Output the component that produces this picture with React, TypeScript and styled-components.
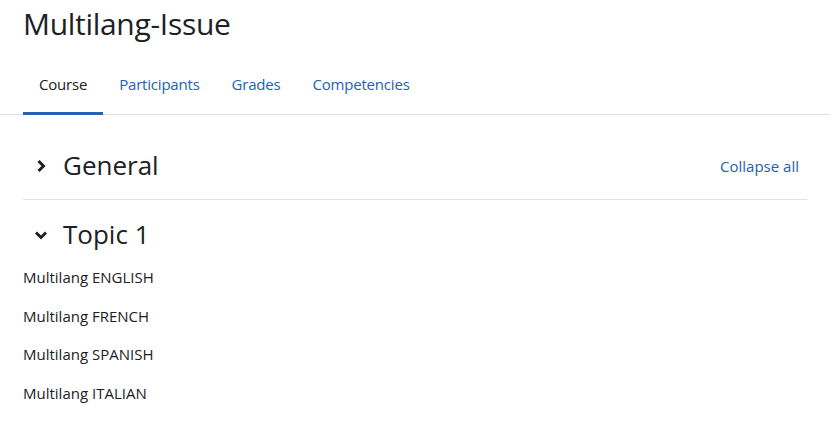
import { createGlobalStyle, styled } from 'styled-components';

const GlobalStyle = createGlobalStyle`
  body {
    margin: 0;
    background: #fff;
    color: #1d2125;
    font-family: 'Open Sans', Lato, sans-serif;
    font-size: 15px;
  }
`;

const SPage = styled.div`
  width: 836px;
`;

const SHeader = styled.header`
  padding: 6px 0 0 23px;
  height: 55px;
  box-sizing: border-box;
`;

const STitle = styled.h1`
  margin: 0;
  font-size: 30px;
  font-weight: 400;
  line-height: 36px;
  letter-spacing: -0.3px;
`;

const SNav = styled.nav`
  display: flex;
  margin-right: 6px;
  padding-left: 23px;
  border-bottom: 1px solid #dee2e6;
`;

const STab = styled.a<{ $active?: boolean }>`
  display: flex;
  align-items: center;
  height: 60px;
  box-sizing: border-box;
  padding: 0 16px;
  border-bottom: 3px solid ${({ $active }) => ($active ? '#2561b4' : 'transparent')};
  margin-bottom: -1px;
  color: ${({ $active }) => ($active ? '#1d2125' : '#2561b4')};
  letter-spacing: -0.2px;
  text-decoration: none;
`;

const SContent = styled.main`
  padding: 0 29px 0 23px;
`;

const SSection = styled.section<{ $divider?: boolean }>`
  border-bottom: ${({ $divider }) => ($divider ? '1px solid #dee2e6' : 'none')};
`;

const SSectionHeader = styled.div<{ $top: number; $bottom: number }>`
  display: flex;
  align-items: center;
  padding: ${({ $top, $bottom }) => `${$top}px 0 ${$bottom}px`};
`;

const SToggle = styled.span`
  display: flex;
  justify-content: center;
  align-items: center;
  width: 35px;
  margin-right: 5px;
  color: #1d2125;
`;

const SSectionTitle = styled.h3`
  flex: 1;
  margin: 0;
  font-size: 26px;
  font-weight: 400;
  line-height: 31px;
`;

const SCollapseAll = styled.a`
  margin-right: 8px;
  color: #2561b4;
  text-decoration: none;
  line-height: 22px;
`;

const SActivityList = styled.ul`
  margin: 0;
  padding: 11px 0 0;
  list-style: none;
`;

const SActivity = styled.li`
  line-height: 22px;
  padding: 5px 0 11.5px;
`;

const ChevronRight = () => (
  <svg width='12' height='14' viewBox='0 0 12 14' fill='none'>
    <polyline points='3.5,2 8.5,7 3.5,12' stroke='currentColor' strokeWidth='3' />
  </svg>
);

const ChevronDown = () => (
  <svg width='14' height='10' viewBox='0 0 14 10' fill='none'>
    <polyline points='2,2.5 7,7.5 12,2.5' stroke='currentColor' strokeWidth='3' />
  </svg>
);

const tabs = ['Course', 'Participants', 'Grades', 'Competencies'];
const activities = ['Multilang ENGLISH', 'Multilang FRENCH', 'Multilang SPANISH', 'Multilang ITALIAN'];

const App = () => (
  <SPage>
    <GlobalStyle />
    <SHeader>
      <STitle>Multilang-Issue</STitle>
    </SHeader>
    <SNav>
      {tabs.map((tab, i) => (
        <STab key={tab} href='#' $active={i === 0}>
          {tab}
        </STab>
      ))}
    </SNav>
    <SContent>
      <SSection $divider>
        <SSectionHeader $top={35} $bottom={18}>
          <SToggle>
            <ChevronRight />
          </SToggle>
          <SSectionTitle>General</SSectionTitle>
          <SCollapseAll href='#'>Collapse all</SCollapseAll>
        </SSectionHeader>
      </SSection>
      <SSection>
        <SSectionHeader $top={19} $bottom={0}>
          <SToggle>
            <ChevronDown />
          </SToggle>
          <SSectionTitle>Topic 1</SSectionTitle>
        </SSectionHeader>
        <SActivityList>
          {activities.map((a) => (
            <SActivity key={a}>{a}</SActivity>
          ))}
        </SActivityList>
      </SSection>
    </SContent>
  </SPage>
);

export default App;
